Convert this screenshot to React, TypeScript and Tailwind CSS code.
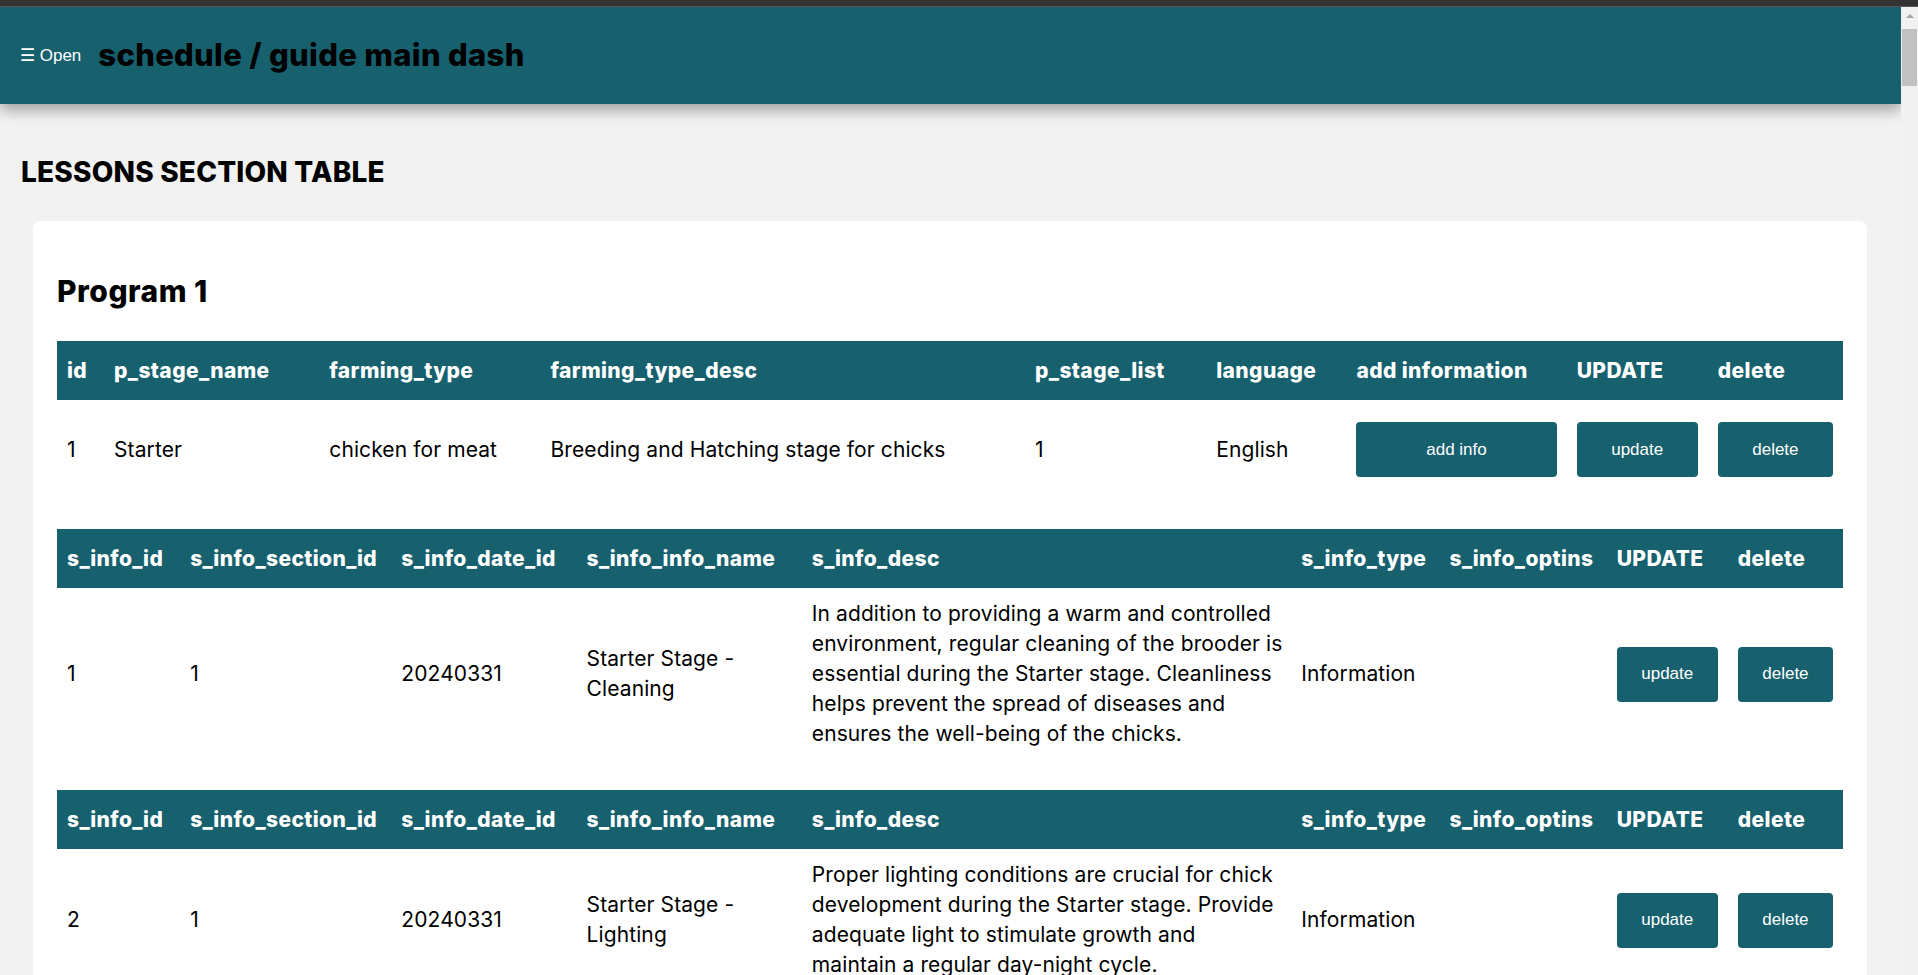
import React from "react";

const teal = "bg-[#17606e]";

const stageHeads = [
  "id",
  "p_stage_name",
  "farming_type",
  "farming_type_desc",
  "p_stage_list",
  "language",
  "add information",
  "UPDATE",
  "delete",
];
const stageCols = ["w-[47px]", "w-[215px]", "w-[221px]", "w-[484px]", "w-[181px]", "w-[140px]", "w-[220px]", "w-[141px]", "w-[135px]"];

const infoHeads = [
  "s_info_id",
  "s_info_section_id",
  "s_info_date_id",
  "s_info_info_name",
  "s_info_desc",
  "s_info_type",
  "s_info_optins",
  "UPDATE",
  "delete",
];
const infoCols = ["w-[123px]", "w-[211px]", "w-[185px]", "w-[225px]", "w-[489px]", "w-[148px]", "w-[167px]", "w-[121px]", "w-[115px]"];

const infos = [
  {
    id: 1,
    section: 1,
    date: "20240331",
    name: ["Starter Stage -", "Cleaning"],
    desc: [
      "In addition to providing a warm and controlled",
      "environment, regular cleaning of the brooder is",
      "essential during the Starter stage. Cleanliness",
      "helps prevent the spread of diseases and",
      "ensures the well-being of the chicks.",
    ],
    type: "Information",
  },
  {
    id: 2,
    section: 1,
    date: "20240331",
    name: ["Starter Stage -", "Lighting"],
    desc: [
      "Proper lighting conditions are crucial for chick",
      "development during the Starter stage. Provide",
      "adequate light to stimulate growth and",
      "maintain a regular day-night cycle.",
    ],
    type: "Information",
  },
];

const Btn = ({ label }: { label: string }) => (
  <button
    className={`${teal} w-full h-[55px] rounded-[4px] text-white text-[17px] tracking-normal font-['Liberation_Sans',Arial,sans-serif]`}
  >
    {label}
  </button>
);

const HeadRow = ({ heads }: { heads: string[] }) => (
  <thead>
    <tr className={`${teal} h-[59px]`}>
      {heads.map((h) => (
        <th key={h} className="px-[10px] text-left text-white text-[21px] font-extrabold tracking-[0.4px] whitespace-nowrap">
          {h}
        </th>
      ))}
    </tr>
  </thead>
);

const App = () => {
  return (
    <div className="h-screen flex flex-col overflow-hidden bg-[#f2f2f2] font-['Inter',sans-serif] text-black">
      <div className="h-[7px] shrink-0 bg-[#333] border-b border-[#555]" />
      <div className="flex flex-1 min-h-0">
        <div className="flex-1 min-w-0 overflow-hidden">
          <header className={`${teal} h-[97px] flex items-center gap-[17px] px-[20px] shadow-[0_6px_14px_rgba(0,0,0,0.35)] relative`}>
            <button className="text-white text-[17px] font-['Liberation_Sans',Arial,sans-serif]">☰ Open</button>
            <h1 className="text-[31px] font-extrabold tracking-[0.3px]">schedule / guide main dash</h1>
          </header>

          <main className="pl-[21px] pr-[34px] pb-[40px]">
            <h2 className="mt-[47px] text-[28px] leading-[42px] font-extrabold tracking-[0.2px] uppercase">LESSONS SECTION TABLE</h2>

            <div className="mt-[28px] ml-[12px] bg-white rounded-[8px] px-[24px] pt-[48px] pb-[30px]">
              <h3 className="text-[30px] leading-[45px] font-extrabold tracking-[0.5px] mb-[27px]">Program 1</h3>

              <table className="w-full table-fixed border-collapse mb-[30px]">
                <colgroup>
                  {stageCols.map((c, i) => (
                    <col key={i} className={c} />
                  ))}
                </colgroup>
                <HeadRow heads={stageHeads} />
                <tbody>
                  <tr className="h-[99px] text-[21px] tracking-[0.1px] [&>td]:px-[10px]">
                    <td>1</td>
                    <td>Starter</td>
                    <td>chicken for meat</td>
                    <td className="whitespace-nowrap">Breeding and Hatching stage for chicks</td>
                    <td>1</td>
                    <td>English</td>
                    <td>
                      <Btn label="add info" />
                    </td>
                    <td>
                      <Btn label="update" />
                    </td>
                    <td>
                      <Btn label="delete" />
                    </td>
                  </tr>
                </tbody>
              </table>

              {infos.map((r) => (
                <table key={r.id} className="w-full table-fixed border-collapse mb-[30px]">
                  <colgroup>
                    {infoCols.map((c, i) => (
                      <col key={i} className={c} />
                    ))}
                  </colgroup>
                  <HeadRow heads={infoHeads} />
                  <tbody>
                    <tr className="text-[21px] leading-[30px] tracking-[0.1px] [&>td]:px-[10px] [&>td]:py-[11px]">
                      <td>{r.id}</td>
                      <td>{r.section}</td>
                      <td>{r.date}</td>
                      <td>
                        {r.name.map((l) => (
                          <span key={l} className="block">
                            {l}
                          </span>
                        ))}
                      </td>
                      <td className="whitespace-nowrap">
                        {r.desc.map((l) => (
                          <span key={l} className="block">
                            {l}
                          </span>
                        ))}
                      </td>
                      <td>{r.type}</td>
                      <td />
                      <td>
                        <Btn label="update" />
                      </td>
                      <td>
                        <Btn label="delete" />
                      </td>
                    </tr>
                  </tbody>
                </table>
              ))}
            </div>
          </main>
        </div>

        <aside className="w-[17px] shrink-0 bg-[#f1f1f1] flex flex-col items-center">
          <div className="h-[17px] w-full flex items-center justify-center">
            <div className="w-0 h-0 border-l-[4px] border-r-[4px] border-b-[4px] border-l-transparent border-r-transparent border-b-[#a3a3a3]" />
          </div>
          <div className="mt-[5px] w-[15px] h-[57px] bg-[#c1c1c1]" />
        </aside>
      </div>
    </div>
  );
};

export default App;
